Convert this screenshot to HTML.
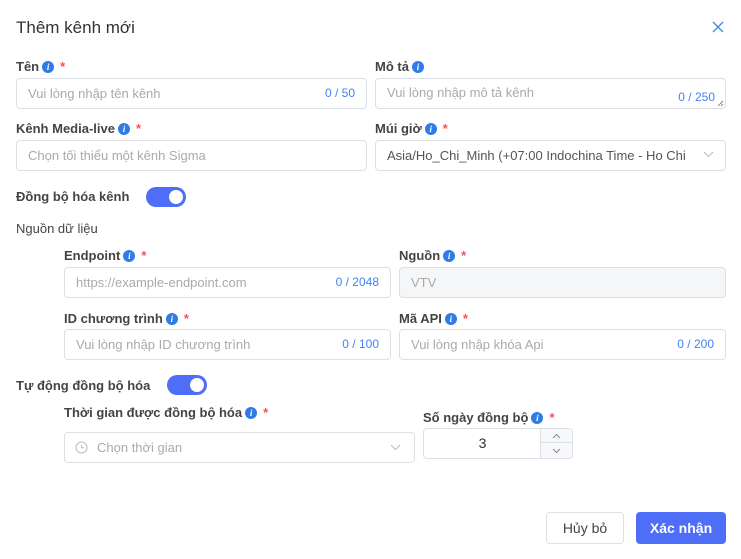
<!DOCTYPE html>
<html><head><meta charset="utf-8"><style>
*{box-sizing:border-box;margin:0;padding:0}
body{width:741px;height:559px;background:#fff;font-family:"Liberation Sans",sans-serif;position:relative;overflow:hidden;color:#333}
.a{position:absolute}
.t{font-size:17px;color:#333;left:16px;top:18px}
.l{font-size:13px;font-weight:bold;color:#444;white-space:nowrap;display:flex;align-items:center}
.i{display:inline-block;width:12px;height:12px;border-radius:50%;background:#2f7be8;color:#fff;font-size:9px;font-style:italic;font-weight:bold;text-align:center;line-height:12px;font-family:"Liberation Serif",serif;margin-left:3px}
.r{color:#f5535a;margin-left:6px;font-weight:bold}
.in{border:1px solid #dcdfe6;border-radius:4px;height:31px;font-size:13px;color:#aaa;padding-left:11px;line-height:29px;white-space:nowrap;overflow:hidden}
.c{position:absolute;right:11px;top:0;color:#3f84f2;font-size:12px}
.tg{width:40px;height:20px;border-radius:10px;background:#4f6ef7}
.tg::after{content:"";position:absolute;right:3px;top:3px;width:14px;height:14px;border-radius:50%;background:#fff}
.btn{height:32px;border-radius:4px;font-size:14px;text-align:center;line-height:30px}
</style></head><body>
<div class="a t">Thêm kênh mới</div>
<svg class="a" style="left:712px;top:21px" width="12" height="12" viewBox="0 0 12 12"><path d="M1 1L11 11M11 1L1 11" stroke="#3f84f2" stroke-width="1.3"/></svg>

<div class="a l" style="left:16px;top:59px">Tên<span class="i">i</span><span class="r">*</span></div>
<div class="a in" style="left:16px;top:78px;width:351px">Vui lòng nhập tên kênh<span class="c" style="top:0">0 / 50</span></div>
<div class="a l" style="left:375px;top:59px">Mô tả<span class="i">i</span></div>
<div class="a in" style="left:375px;top:78px;width:351px;line-height:28px">Vui lòng nhập mô tả kênh<span class="c" style="top:4px;right:10px">0 / 250</span>
<svg style="position:absolute;right:1px;bottom:1px" width="7" height="7"><path d="M6 1L1 6M6 4L4 6" stroke="#666" stroke-width="0.8"/></svg></div>

<div class="a l" style="left:16px;top:121px">Kênh Media-live<span class="i">i</span><span class="r">*</span></div>
<div class="a in" style="left:16px;top:140px;width:351px">Chọn tối thiểu một kênh Sigma</div>
<div class="a l" style="left:375px;top:121px">Múi giờ<span class="i">i</span><span class="r">*</span></div>
<div class="a in" style="left:375px;top:140px;width:351px;color:#555"><span style="display:block;width:303px;overflow:hidden">Asia/Ho_Chi_Minh (+07:00 Indochina Time - Ho Chi Minh City)</span></div>
<svg class="a" style="left:703px;top:151px" width="11" height="7" viewBox="0 0 11 7"><path d="M1 1L5.5 5.5L10 1" stroke="#bbb" fill="none"/></svg>

<div class="a l" style="left:16px;top:189px">Đồng bộ hóa kênh</div>
<div class="a tg" style="left:146px;top:187px"></div>
<div class="a" style="left:16px;top:221px;font-size:13px;color:#444">Nguồn dữ liệu</div>

<div class="a l" style="left:64px;top:248px">Endpoint<span class="i">i</span><span class="r">*</span></div>
<div class="a in" style="left:64px;top:267px;width:327px">https://example-endpoint.com<span class="c">0 / 2048</span></div>
<div class="a l" style="left:399px;top:248px">Nguồn<span class="i">i</span><span class="r">*</span></div>
<div class="a in" style="left:399px;top:267px;width:327px;background:#f5f6f7">VTV</div>

<div class="a l" style="left:64px;top:311px">ID chương trình<span class="i">i</span><span class="r">*</span></div>
<div class="a in" style="left:64px;top:329px;width:327px">Vui lòng nhập ID chương trình<span class="c">0 / 100</span></div>
<div class="a l" style="left:399px;top:311px">Mã API<span class="i">i</span><span class="r">*</span></div>
<div class="a in" style="left:399px;top:329px;width:327px">Vui lòng nhập khóa Api<span class="c">0 / 200</span></div>

<div class="a l" style="left:16px;top:378px">Tự động đồng bộ hóa</div>
<div class="a tg" style="left:167px;top:375px"></div>

<div class="a l" style="left:64px;top:405px">Thời gian được đồng bộ hóa<span class="i">i</span><span class="r">*</span></div>
<div class="a in" style="left:64px;top:432px;width:351px;padding-left:32px">Chọn thời gian</div>
<svg class="a" style="left:75px;top:441px" width="13" height="13" viewBox="0 0 13 13"><circle cx="6.5" cy="6.5" r="5.5" stroke="#bbb" fill="none"/><path d="M6.5 3.5V6.8H9" stroke="#bbb" fill="none"/></svg>
<svg class="a" style="left:390px;top:444px" width="11" height="7" viewBox="0 0 11 7"><path d="M1 1L5.5 5.5L10 1" stroke="#bbb" fill="none"/></svg>

<div class="a l" style="left:423px;top:410px">Số ngày đồng bộ<span class="i">i</span><span class="r">*</span></div>
<div class="a in" style="left:423px;top:428px;width:150px;padding:0;color:#333;font-size:14px">
<span style="position:absolute;left:0;width:117px;text-align:center">3</span>
<div style="position:absolute;left:116px;top:0;width:33px;height:29px;border-left:1px solid #dcdfe6;background:#f7f8fa">
<div style="height:14px;border-bottom:1px solid #dcdfe6"></div></div>
<svg style="position:absolute;left:128px;top:4px" width="9" height="6"><path d="M1 5L4.5 1.5L8 5" stroke="#888" fill="none"/></svg>
<svg style="position:absolute;left:128px;top:19px" width="9" height="6"><path d="M1 1L4.5 4.5L8 1" stroke="#888" fill="none"/></svg>
</div>

<div class="a btn" style="left:546px;top:512px;width:78px;border:1px solid #dcdfe6;color:#444">Hủy bỏ</div>
<div class="a btn" style="left:636px;top:512px;width:90px;background:#4f6ef7;color:#fff;font-weight:bold;line-height:32px">Xác nhận</div>
</body></html>
